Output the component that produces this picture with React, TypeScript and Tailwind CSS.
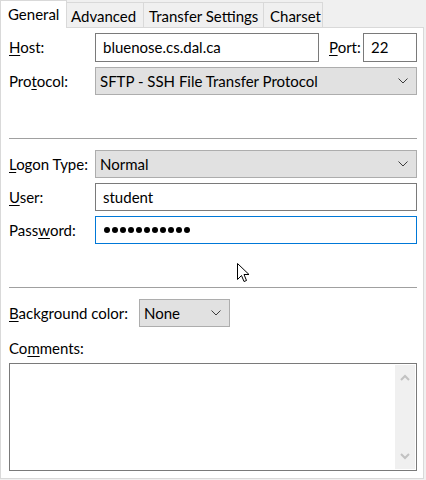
import React from "react";

const font = { fontFamily: 'Lato, "Noto Sans", sans-serif' };

function U({ children }: { children: React.ReactNode }) {
  return <span className="underline underline-offset-[2px] decoration-1">{children}</span>;
}

function Chevron({ className = "" }: { className?: string }) {
  return (
    <svg width="10" height="6" viewBox="0 0 10 6" className={className}>
      <path d="M0.5 0.5 L5 5 L9.5 0.5" fill="none" stroke="#3c3c3c" strokeWidth="1" />
    </svg>
  );
}

export default function App() {
  return (
    <div
      className="relative w-[426px] h-[480px] bg-[#f0f0f0] text-black text-[15px] leading-none overflow-hidden whitespace-nowrap"
      style={font}
    >
      {/* Tabs */}
      <div className="flex items-end h-[27px]">
        <div className="relative z-10 -mb-px h-[28px] w-[67px] bg-white border border-b-0 border-[#d9d9d9] pl-[7px] flex items-center pb-[1px]">
          General
        </div>
        <div className="h-[25px] w-[77px] bg-[#f0f0f0] border-t border-r border-[#d9d9d9] pl-[4px] flex items-center pt-[2px]">
          Advanced
        </div>
        <div className="h-[25px] w-[120px] bg-[#f0f0f0] border-t border-r border-[#d9d9d9] pl-[5px] flex items-center pt-[2px]">
          Transfer Settings
        </div>
        <div className="h-[25px] w-[59px] bg-[#f0f0f0] border-t border-r border-[#d9d9d9] pl-[6px] flex items-center pt-[2px]">
          Charset
        </div>
      </div>

      {/* Panel */}
      <div className="w-[424px] h-[452px] bg-white border border-[#d9d9d9] pl-[8px] flex flex-col">
        <div className="flex items-center h-[29px] mt-[5px]">
          <div className="w-[86px]">
            <U>H</U>ost:
          </div>
          <div className="w-[224px] h-[29px] border border-[#7a7a7a] flex items-center pl-[7px]">
            bluenose.cs.dal.ca
          </div>
          <div className="ml-[10px] w-[34px]">
            <U>P</U>ort:
          </div>
          <div className="w-[54px] h-[29px] border border-[#7a7a7a] flex items-center pl-[7px]">22</div>
        </div>

        <div className="flex items-center h-[28px] mt-[5px]">
          <div className="w-[86px]">
            Pro<U>t</U>ocol:
          </div>
          <div className="w-[322px] h-[28px] border border-[#adadad] bg-[#e1e1e1] flex items-center pl-[4px] pr-[8px] justify-between">
            <span>SFTP - SSH File Transfer Protocol</span>
            <Chevron />
          </div>
        </div>

        <div className="mt-[43px] w-[408px] h-px bg-[#a0a0a0]" />

        <div className="flex items-center h-[28px] mt-[11px]">
          <div className="w-[86px]">
            <U>L</U>ogon Type:
          </div>
          <div className="w-[322px] h-[28px] border border-[#adadad] bg-[#e1e1e1] flex items-center pl-[4px] pr-[8px] justify-between">
            <span>Normal</span>
            <Chevron />
          </div>
        </div>

        <div className="flex items-center h-[28px] mt-[5px]">
          <div className="w-[86px]">
            <U>U</U>ser:
          </div>
          <div className="w-[322px] h-[28px] border border-[#7a7a7a] flex items-center pl-[7px]">student</div>
        </div>

        <div className="flex items-center h-[28px] mt-[5px]">
          <div className="w-[86px]">
            Pass<U>w</U>ord:
          </div>
          <div className="w-[322px] h-[28px] border border-[#0078d7] flex items-center pl-[7px]">
            <div className="flex items-center">
              {Array.from({ length: 11 }).map((_, i) => (
                <span key={i} className="w-[8px] h-[8px] flex items-center justify-center">
                  <span className="block w-[6px] h-[6px] rounded-full bg-black" />
                </span>
              ))}
            </div>
          </div>
        </div>

        <div className="mt-[43px] w-[408px] h-px bg-[#a0a0a0]" />

        <div className="flex items-center h-[28px] mt-[11px]">
          <div className="w-[130px]">
            <U>B</U>ackground color:
          </div>
          <div className="w-[91px] h-[28px] border border-[#adadad] bg-[#e1e1e1] flex items-center pl-[4px] pr-[8px] justify-between">
            <span>None</span>
            <Chevron />
          </div>
        </div>

        <div className="mt-[11px] h-[20px] flex items-center">
          Co<U>m</U>ments:
        </div>

        <div className="mt-[5px] w-[408px] h-[108px] border border-[#7a7a7a] flex justify-end p-px">
          <div className="w-[20px] h-full bg-[#f0f0f0] flex flex-col items-center justify-between py-[9px]">
            <svg width="10" height="7" viewBox="0 0 10 7">
              <path d="M1 6 L5 2 L9 6" fill="none" stroke="#c2c2c2" strokeWidth="2" />
            </svg>
            <svg width="10" height="7" viewBox="0 0 10 7">
              <path d="M1 1 L5 5 L9 1" fill="none" stroke="#c2c2c2" strokeWidth="2" />
            </svg>
          </div>
        </div>
      </div>

      {/* Mouse cursor */}
      <svg className="absolute left-[237px] top-[263px]" width="13" height="20" viewBox="0 0 13 20">
        <path
          d="M0.5 0.5 L0.5 16.5 L4.5 12.5 L7 18.5 L9.5 17.5 L7 11.5 L12 11.5 Z"
          fill="white"
          stroke="black"
          strokeWidth="1"
          strokeLinejoin="miter"
        />
      </svg>
    </div>
  );
}
